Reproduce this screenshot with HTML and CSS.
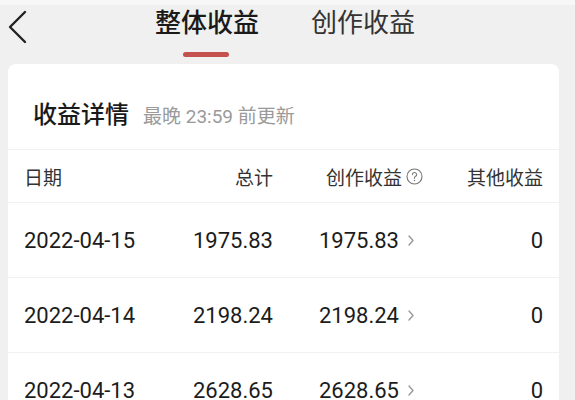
FILE: index.html
```html
<!DOCTYPE html>
<html lang="zh-CN">
<head>
<meta charset="utf-8">
<link rel="stylesheet" href="styles.css">
</head>
<body>
<div class="page">
  <div class="topbar">
    <svg class="back" width="20" height="34" viewBox="0 0 20 34"><polyline points="17,2 2,17 17,32" fill="none" stroke="#222" stroke-width="2.4" stroke-linecap="round" stroke-linejoin="round"/></svg>
    <div class="tabs">
      <div class="tab active">整体收益<span class="bar"></span></div>
      <div class="tab">创作收益</div>
    </div>
  </div>
  <div class="card">
    <div class="card-title">
      <span class="title">收益详情</span>
      <span class="sub">最晚 23:59 前更新</span>
    </div>
    <div class="row head">
      <div class="c1">日期</div>
      <div class="c2">总计</div>
      <div class="c3">创作收益<svg class="q" width="17" height="17" viewBox="0 0 17 17"><circle cx="8.5" cy="8.5" r="7.5" fill="none" stroke="#777" stroke-width="1.1"/><path d="M6.4 6.6a2.1 2.1 0 1 1 2.9 2c-0.5 0.2-0.8 0.6-0.8 1.2v0.5" fill="none" stroke="#777" stroke-width="1.1" stroke-linecap="round"/><circle cx="8.5" cy="12.4" r="0.75" fill="#777"/></svg></div>
      <div class="c4">其他收益</div>
    </div>
    <div class="row">
      <div class="c1">2022-04-15</div>
      <div class="c2">1975.83</div>
      <div class="c3">1975.83<svg class="chev" width="8" height="13" viewBox="0 0 8 13"><polyline points="2,2 6,6.5 2,11" fill="none" stroke="#999" stroke-width="1.4" stroke-linecap="round" stroke-linejoin="round"/></svg></div>
      <div class="c4">0</div>
    </div>
    <div class="row">
      <div class="c1">2022-04-14</div>
      <div class="c2">2198.24</div>
      <div class="c3">2198.24<svg class="chev" width="8" height="13" viewBox="0 0 8 13"><polyline points="2,2 6,6.5 2,11" fill="none" stroke="#999" stroke-width="1.4" stroke-linecap="round" stroke-linejoin="round"/></svg></div>
      <div class="c4">0</div>
    </div>
    <div class="row">
      <div class="c1">2022-04-13</div>
      <div class="c2">2628.65</div>
      <div class="c3">2628.65<svg class="chev" width="8" height="13" viewBox="0 0 8 13"><polyline points="2,2 6,6.5 2,11" fill="none" stroke="#999" stroke-width="1.4" stroke-linecap="round" stroke-linejoin="round"/></svg></div>
      <div class="c4">0</div>
    </div>
  </div>
</div>
</body>
</html>
```
FILE: styles.css
```css
html, body {
  margin: 0;
  padding: 0;
  background: #f0f0f0;
  overflow: hidden;
}
body {
  font-family: Roboto, "Noto Sans CJK SC", sans-serif;
  color: #222;
}
.page {
  width: 575px;
  height: 400px;
  overflow: hidden;
  border-top: 5px solid #f7f7f7;
  box-sizing: border-box;
}
.topbar {
  height: 59px;
  display: flex;
  align-items: flex-start;
  padding-left: 8px;
}
.back {
  margin-top: 5px;
  display: block;
}
.tabs {
  display: flex;
  gap: 52px;
  margin-left: 127px;
}
.tab {
  position: relative;
  font-size: 26px;
  line-height: 36px;
  color: #333;
  font-weight: 400;
}
.tab.active {
  color: #1a1a1a;
  font-weight: 500;
}
.tab .bar {
  position: absolute;
  left: 28px;
  top: 47px;
  width: 46px;
  height: 5px;
  border-radius: 3px;
  background: #c4514e;
}
.card {
  margin: 0 16px 0 8px;
  background: #fff;
  border-radius: 8px 8px 0 0;
  height: 400px;
}
.card-title {
  height: 86px;
  display: flex;
  align-items: baseline;
  padding: 31px 0 0 25px;
  box-sizing: border-box;
  border-bottom: 1px solid #f1f1f1;
}
.title {
  font-size: 24px;
  font-weight: 500;
  color: #1a1a1a;
}
.sub {
  margin-left: 14px;
  font-size: 19px;
  color: #9a9a9a;
}
.row {
  display: grid;
  grid-template-columns: 150px 99px 124px 1fr;
  align-items: center;
  height: 74px;
  padding: 0 16px;
  border-bottom: 1px solid #f1f1f1;
  font-size: 22px;
  color: #1c1c1c;
}
.row.head {
  height: 52px;
  font-size: 19px;
  color: #333;
}
.c2, .c4 {
  text-align: right;
}
.c3 {
  padding-left: 46px;
  display: flex;
  align-items: center;
  white-space: nowrap;
}
.head .c3 {
  padding-left: 53px;
}
.c3 svg {
  flex-shrink: 0;
  display: block;
}
.q {
  margin-left: 4px;
}
.chev {
  margin-left: 8px;
}
```
